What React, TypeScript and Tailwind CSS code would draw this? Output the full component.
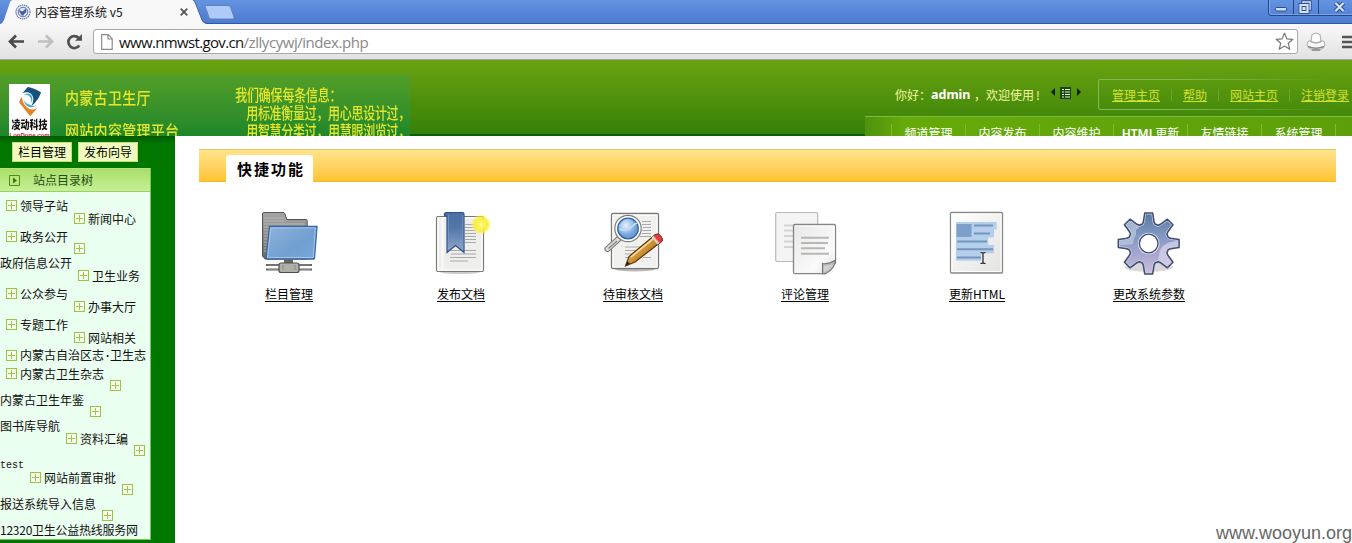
import React from "react";

const cjk = "font-['Noto_Sans_CJK_SC',sans-serif]";

type Node = { label?: React.ReactNode; icon?: boolean; row: string };

const nodes: Node[] = [
  { label: "领导子站", icon: true, row: "mt-[8px] pl-[6px]" },
  { label: "新闻中心", icon: true, row: "mt-px pl-[74px]" },
  { label: "政务公开", icon: true, row: "mt-[6px] pl-[6px]" },
  { icon: true, row: "pl-[74px]" },
  { label: "政府信息公开", row: "mt-[2px]" },
  { label: "卫生业务", icon: true, row: "mt-px pl-[78px]" },
  { label: "公众参与", icon: true, row: "mt-[6px] pl-[6px]" },
  { label: "办事大厅", icon: true, row: "mt-px pl-[74px]" },
  { label: "专题工作", icon: true, row: "mt-[6px] pl-[6px]" },
  { label: "网站相关", icon: true, row: "mt-px pl-[74px]" },
  { label: <>内蒙古自治区志<span className="inline-block w-[6px] text-center font-['Liberation_Mono',monospace] font-bold">·</span>卫生志</>, icon: true, row: "mt-[6px] pl-[6px]" },
  { label: "内蒙古卫生杂志", icon: true, row: "mt-[6px] pl-[6px]" },
  { icon: true, row: "pl-[110px]" },
  { label: "内蒙古卫生年鉴", row: "mt-[2px]" },
  { icon: true, row: "pl-[90px]" },
  { label: "图书库导航", row: "mt-[2px]" },
  { label: "资料汇编", icon: true, row: "mt-px pl-[66px]" },
  { icon: true, row: "pl-[134px]" },
  { label: "test", row: "mt-[3px] font-['Liberation_Mono',monospace] text-[10px]" },
  { label: "网站前置审批", icon: true, row: "pl-[30px]" },
  { icon: true, row: "pl-[122px]" },
  { label: "报送系统导入信息", row: "mt-[2px]" },
  { icon: true, row: "pl-[102px]" },
  { label: "12320卫生公益热线服务网", row: "mt-[2px] tracking-[-0.25px]" },
];

function Plus() {
  return (
    <svg className="-mt-px mr-[3px] shrink-0" width="11" height="11" viewBox="0 0 11 11" shapeRendering="crispEdges">
      <rect x=".5" y=".5" width="10" height="10" fill="#f6fff0" stroke="#9cc53f" />
      <path d="M2 5.5h7M5.5 2v7" stroke="#a0c848" />
    </svg>
  );
}

function FolderIcon() {
  return (
    <svg width="64" height="64" viewBox="0 0 64 64">
      <defs>
        <linearGradient id="fb" x1="0" y1="0" x2="0" y2="1"><stop stopColor="#a5a5a5" /><stop offset="1" stopColor="#6a6a6a" /></linearGradient>
        <linearGradient id="fs" x1="0" y1="0" x2="1" y2="1"><stop stopColor="#8fb3dc" /><stop offset=".6" stopColor="#719fd0" /><stop offset="1" stopColor="#79a8dc" /></linearGradient>
      </defs>
      <path d="M5.500 3q0-1.500 1.500-1.500h19q1.500 0 2 1.500l1.800 5.500H49q1.200 0 1.200 1.200V48H8L5.500 45z" fill="url(#fb)" stroke="#555" />
      <path d="M7 7h20M7 10h21M7 13h40M7 16h5M7 19h5M7 22h5M7 25h4M7 28h4M7 31h4M7 34h4M7 37h4M7 40h3" stroke="#c5c5c5" strokeWidth=".7" />
      <path d="M12.500 15.500H60L57.500 47q-.2 1-1.200 1H10.500Q9 48 9.200 46.500z" fill="url(#fs)" stroke="#3465a4" strokeWidth="1.300" />
      <path d="M13.700 16.800H58.400L56.300 46.500H10.500z" fill="none" stroke="#b4cfea" strokeWidth=".8" />
      <path d="M27 48.500h9v4h-9z" fill="#666" />
      <path d="M9 54h46M9 58.500h46" stroke="#666" strokeWidth="2.200" />
      <path d="M11 54h42M11 58.500h42" stroke="#a0a0a0" strokeWidth=".6" />
      <rect x="22" y="52" width="20" height="9.500" rx="2" fill="#b0b0aa" stroke="#4f504c" strokeWidth="1.200" />
      <path d="M26 54v5M38 54v5" stroke="#888a85" />
    </svg>
  );
}

function PublishIcon() {
  return (
    <svg width="64" height="64" viewBox="0 0 64 64">
      <defs>
        <linearGradient id="rb" x1="0" y1="0" x2="0" y2="1"><stop stopColor="#4a6fa5" /><stop offset=".4" stopColor="#5577aa" /><stop offset="1" stopColor="#93a9cc" /></linearGradient>
        <radialGradient id="glow"><stop stopColor="#fffcae" /><stop offset=".35" stopColor="#fff246" /><stop offset=".65" stopColor="#f8ed39" stopOpacity=".9" /><stop offset="1" stopColor="#fff46b" stopOpacity="0" /></radialGradient>
      </defs>
      <ellipse cx="31" cy="61" rx="20" ry="2" fill="#ccc" />
      <rect x="7.500" y="5.500" width="47" height="55" rx="1.500" fill="#eeeeec" stroke="#777" strokeWidth="1.200" />
      <rect x="9" y="7" width="44" height="52" fill="none" stroke="#fff" strokeWidth="1.200" />
      <path d="M13.500 7v52" stroke="#fafafa" strokeWidth="2" />
      <path d="M36 13.500h11M36 16.500h11M36 19.500h11M36 22.500h11M36 25.500h11M36 28.500h11M36 31.500h11M21 39.500h26M22 43h25M21 46.500h26M21 50h18" stroke="#a9a9a9" strokeWidth="1" />
      <path d="M15.500 5V3.500q0-2 2-2h16q1.500 0 1.500 1.500v38.500l-8.500-7-8.500 7V5z" fill="url(#rb)" stroke="#2c4f86" strokeWidth="1.200" />
      <path d="M19.300 4v34.500M33.800 4v34.500" stroke="#7fa0cf" strokeWidth=".8" />
      <circle cx="52" cy="13.500" r="10.500" fill="url(#glow)" />
    </svg>
  );
}

function ReviewIcon() {
  return (
    <svg width="64" height="64" viewBox="0 0 64 64">
      <defs>
        <radialGradient id="lens" cx=".4" cy=".35"><stop stopColor="#eaf2fc" /><stop offset=".55" stopColor="#a5c8ee" /><stop offset="1" stopColor="#6f9fd8" /></radialGradient>
        <linearGradient id="pen" x1="0" y1="0" x2="1" y2="1"><stop offset=".3" stopColor="#ecbb63" /><stop offset=".6" stopColor="#b87f25" /></linearGradient>
      </defs>
      <ellipse cx="34" cy="58" rx="20" ry="2.500" fill="#bbb" />
      <rect x="10.500" y="2.500" width="47" height="55" rx="1.500" fill="#f0f0ef" stroke="#777" strokeWidth="1.300" />
      <rect x="12" y="4" width="44" height="52" fill="none" stroke="#fff" />
      <path d="M41 10.500h9M41 13.500h9M42 16.500h8M41 19.500h9M41 22.500h9M39 25.500h11M24 36h21M24 39.500h18M24 43h15M24 46.500h10M42 46.500h8" stroke="#aaa" />
      <path d="M17.500 28L6.500 38" stroke="#777" strokeWidth="6" strokeLinecap="round" />
      <path d="M17.500 28L6.500 38" stroke="#ddd" strokeWidth="4" strokeLinecap="round" />
      <path d="M16 30L7.500 37.500" stroke="#888" strokeWidth="1.500" />
      <circle cx="27" cy="17.500" r="13.200" fill="#fff" stroke="#7b7d79" strokeWidth="1.200" />
      <circle cx="27" cy="17.500" r="10.300" fill="url(#lens)" stroke="#3465a4" strokeWidth="1.300" />
      <path d="M18.500 18q7 3 12-2t5.500-3" stroke="#c9def5" strokeWidth="1.500" fill="none" />
      <path d="M24.500 55L28 45.500 54.500 23.500q3-1.500 5.500 2t.5 5L34 51z" fill="url(#pen)" stroke="#5b3507" strokeWidth="1.200" />
      <path d="M30 46L53 27" stroke="#ffe0a0" strokeWidth="1.500" />
      <path d="M54.500 23.500q3-1.500 5.500 2t.5 5l-2.500 2-6-7z" fill="#e8383a" stroke="#8f3c36" />
      <path d="M50.500 26.500l6 7 2-1.500-6-7.300z" fill="#d6d2ca" />
      <path d="M24.500 55l1.600-4.500 3 2z" fill="#222" />
    </svg>
  );
}

function CommentsIcon() {
  return (
    <svg width="64" height="64" viewBox="0 0 64 64">
      <defs><linearGradient id="pg" x1="0" y1="0" x2="1" y2="1"><stop stopColor="#e8e8e8" /><stop offset=".7" stopColor="#fafafa" /><stop offset="1" stopColor="#ddd" /></linearGradient></defs>
      <rect x="2.700" y="1.500" width="42" height="49" rx="1.500" fill="#f4f4f4" stroke="#b9b9b9" strokeWidth="1.200" />
      <path d="M11 14.500h10M11 19.500h10M11 25h9M11 30.500h9M11 36h9" stroke="#d4d4d4" strokeWidth="2" />
      <path d="M22 13.500h39q1.500 0 1.500 1.500v37L52 62.700H22q-1.500 0-1.500-1.500V15q0-1.500 1.500-1.500z" fill="url(#pg)" stroke="#858585" strokeWidth="1.300" />
      <path d="M22 15h39v37" fill="none" stroke="#fff" />
      <path d="M28 26.800h28M28 32h27M28 37.300h24M28 42.700h28" stroke="#b7b7b5" strokeWidth="2" />
      <path d="M49.500 52.500q6 1 13-3.500-.5 9-10 13.700H49.500z" fill="#b9b9b7" stroke="#777" strokeWidth="1.100" />
      <path d="M51 54.500q5 .5 9-1.500-2 5-9 8z" fill="#d2d2d0" />
    </svg>
  );
}

function HtmlIcon() {
  return (
    <svg width="64" height="64" viewBox="0 0 64 64">
      <defs><linearGradient id="hp" x1="0" y1="0" x2="1" y2="1"><stop stopColor="#fff" /><stop offset="1" stopColor="#e3e3e1" /></linearGradient></defs>
      <rect x="5.500" y="1.500" width="52" height="60.500" rx="1" fill="url(#hp)" stroke="#888" strokeWidth="1.300" />
      <rect x="7" y="3" width="49" height="57.500" fill="none" stroke="#fff" />
      <path d="M11 11h40.700v7.500H49v8h-5.700V34H49v8.300H36.300v7.500H11z" fill="#b5cfea" />
      <path d="M11.500 13h15v13h-15z" fill="#7e9fc9" />
      <path d="M29 14.500h19M29 22.500h16M12 30.500h30M12 38.300h36M12 46.500h24" stroke="#7595bf" strokeWidth="2" />
      <path d="M35.500 41.500q2.500 0 2.500 1v9q0 1-2.500 1M40.500 41.500q-2.500 0-2.500 1v9q0 1 2.500 1" fill="none" stroke="#222" strokeWidth="1.200" />
    </svg>
  );
}

const CX = 31.7;
const CY = 32.5;
function gearPath() {
  const pts: string[] = [];
  for (let i = 0; i < 8; i++) {
    const a = (i * Math.PI) / 4 - Math.PI / 2;
    for (const [r, d] of [[20.5, -0.31], [22.5, -0.24], [30.7, -0.13], [30.7, 0.13], [22.5, 0.24], [20.5, 0.31]]) {
      pts.push(`${(CX + r * Math.cos(a + d)).toFixed(1)} ${(CY + r * Math.sin(a + d)).toFixed(1)}`);
    }
  }
  return "M" + pts.join("L") + "z";
}

function GearIcon() {
  const d = gearPath();
  return (
    <svg width="64" height="64" viewBox="0 0 64 64">
      <defs>
        <linearGradient id="gr" x1="0" y1="0" x2="0" y2="1"><stop stopColor="#57779f" /><stop offset=".35" stopColor="#7f97c0" /><stop offset=".7" stopColor="#aaa7cf" /><stop offset="1" stopColor="#cdbfe0" /></linearGradient>
        <clipPath id="gc"><path d={d} /></clipPath>
      </defs>
      <ellipse cx="32" cy="56" rx="24" ry="5" fill="#d8d8d8" />
      <path d={d} fill="url(#gr)" />
      <g clipPath="url(#gc)">
        <path d="M0 34V5h23l-1 12-3 2v5l-2 3-1 6-7 1z" fill="#bccbe0" opacity=".7" />
        <path d="M64 30q-21 0-22 14t-9 20h31z" fill="#d9d1ea" opacity=".75" />
        <path d={d} fill="none" stroke="#c5cfe6" strokeWidth="3" />
      </g>
      <path d={d} fill="none" stroke="#414d71" strokeWidth="1.500" strokeLinejoin="round" />
      <circle cx={CX} cy={CY} r="10.800" fill="#d7def0" />
      <circle cx={CX} cy={CY} r="9.300" fill="#fff" stroke="#414d71" strokeWidth="1.300" />
    </svg>
  );
}

const shortcuts = [
  { label: "栏目管理", Icon: FolderIcon },
  { label: "发布文档", Icon: PublishIcon },
  { label: "待审核文档", Icon: ReviewIcon },
  { label: "评论管理", Icon: CommentsIcon },
  { label: "更新HTML", Icon: HtmlIcon },
  { label: "更改系统参数", Icon: GearIcon },
];

function TabStrip() {
  return (
    <div className="flex h-6 justify-between border-b border-[#2f5b9d] bg-linear-to-b from-[#6493e0] to-[#4c7bd0]">
      <div className="relative flex h-6 w-[240px] items-center">
        <svg className="absolute left-0 top-0" width="240" height="24" viewBox="0 0 240 24">
          <path d="M0 24q3-1 4-4L10 2q1-2 3-2h179q2 0 3 2l7 18q1 3 5 4z" fill="#f8f8f8" />
          <path d="M193 0q1.500.5 2 2l7 18q1 3 5 3.500" fill="none" stroke="#3864a8" />
          <path d="M206 5.500h22q2 0 2.500 1.500l3.500 10q.5 2-1.500 2h-21q-2 0-2.500-1.500l-3.500-10q-.5-2 .5-2z" fill="#aecbf7" stroke="#5c83bd" />
        </svg>
        <svg className="relative ml-[15px]" width="16" height="16" viewBox="0 0 16 16">
          <circle cx="8" cy="8" r="7" fill="#eef1fa" stroke="#6678ab" strokeWidth="1.200" strokeDasharray="1.500 .6" />
          <circle cx="8" cy="8" r="4.800" fill="#dce4f3" stroke="#5e72aa" />
          <path d="M4 5q1.500 2.500 3.500 2.500L11 4.500Q12 9 9 10l-.5 1.500h-2L6 10Q4 8.500 4 5z" fill="#435c9f" />
        </svg>
        <span className={`relative ml-1 whitespace-pre text-[12px] leading-6 text-[#111] ${cjk}`}>内容管理系统 v5</span>
        <svg className="relative ml-auto mr-[52px]" width="8" height="8" viewBox="0 0 8 8"><path d="M.7.7l6.600 6.600M7.300.7L.7 7.300" stroke="#555" strokeWidth="1.800" /></svg>
      </div>
      <svg width="84" height="17" viewBox="0 0 84 17">
        <path d="M.5 0v13q0 2.500 2.500 2.500h81M25.500 0v15M50.500 0v15" fill="none" stroke="#24478a" />
        <path d="M1.500 0v12.500q0 2 2 2h80.500" fill="none" stroke="#8fb3ee" strokeWidth=".7" />
        <rect x="7.500" y="7.500" width="11" height="3.500" rx="1" fill="#cfe0fa" stroke="#2d4d89" />
        <path d="M35 2h7v7h-7z" fill="none" stroke="#2d4d89" strokeWidth="3.400" />
        <path d="M35 2h7v7h-7z" fill="none" stroke="#d6e5fc" strokeWidth="1.600" />
        <path d="M32.500 5h7v7h-7z" fill="#5c85d0" stroke="#2d4d89" strokeWidth="3.800" />
        <path d="M32.500 5h7v7h-7z" fill="#2d4d89" stroke="#d6e5fc" strokeWidth="2.200" />
        <path d="M34.500 7h3v3h-3z" fill="#d6e5fc" />
        <path d="M67.500 3l8 8M75.500 3l-8 8" stroke="#2d4d89" strokeWidth="4.200" />
        <path d="M67.500 3l8 8M75.500 3l-8 8" stroke="#d6e5fc" strokeWidth="2.200" />
      </svg>
    </div>
  );
}

function Toolbar() {
  return (
    <div className="flex h-9 items-center border-b border-[#a3a3a3] bg-linear-to-b from-[#f8f8f8] to-[#e2e2e2]">
      <svg className="shrink-0" width="93" height="30" viewBox="0 0 93 30">
        <path d="M24 14.500H11M16 8.500l-6 6 6 6" fill="none" stroke="#4a4a4a" strokeWidth="2.700" />
        <path d="M38 14.500h13M46 8.500l6 6-6 6" fill="none" stroke="#c0c0c0" strokeWidth="2.700" />
        <path d="M79.300 18.500a6 6 0 1 1-.5-7.500" fill="none" stroke="#505050" strokeWidth="2.700" />
        <path d="M82 7v6.700h-7z" fill="#505050" />
      </svg>
      <div className="flex h-[25px] w-[1205px] items-center rounded-[3px] border border-[#a9a9a9] bg-white">
        <svg className="ml-[7px] shrink-0" width="12" height="16" viewBox="0 0 12 16"><path d="M.7.7h6.500l4 4v10.600H.7zM7 1v4h4" fill="#fff" stroke="#8b8b8b" strokeWidth="1.200" /></svg>
        <span className="ml-[6px] w-[260px] whitespace-nowrap font-['Open_Sans',sans-serif] text-[15px] leading-[22px] tracking-[-0.45px] text-[#888]">
          <span className="tracking-[-0.65px] text-[#111]">www.nmwst.gov.cn</span>/zllycywj/index.php
        </span>
        <svg className="ml-auto mr-[3px]" width="19" height="19" viewBox="0 0 19 19"><path d="M9.500 1.200l2.400 5.600 6 .5-4.600 4 1.500 6-5.300-3.300-5.300 3.300 1.500-6-4.600-4 6-.5z" fill="#fff" stroke="#777" strokeWidth="1.200" strokeLinejoin="round" /></svg>
      </div>
      <svg className="ml-[8px] shrink-0" width="20" height="20" viewBox="0 0 20 20">
        <path d="M6 2.500q4-3 8 0l1 7q-5 2.500-10 0z" fill="#fcfcfc" stroke="#aaa" />
        <path d="M5 8.500q-4 0-4 4 1.500 4 5 5.500h8q4-1.500 5-5.500 0-4-4-4v1.500q-5 2.500-10 0z" fill="#f6f6f6" stroke="#aaa" />
        <path d="M2 14.500q8 3.500 16 0M6 18h8" fill="none" stroke="#888" strokeWidth="1.500" />
      </svg>
      <svg className="ml-auto shrink-0" width="10" height="14" viewBox="0 0 10 14"><path d="M0 2h10M0 7h10M0 12h10" stroke="#555" strokeWidth="2.600" /></svg>
    </div>
  );
}

function Logo() {
  return (
    <div className="ml-[9px] mt-[10px] flex h-[60px] w-[41px] shrink-0 flex-col items-center overflow-hidden bg-white">
      <svg className="mt-[2px] shrink-0" width="24" height="31" viewBox="55 90 72 95">
        <path d="M68 112L84 93Q106 96 125 110Q120 127 105 143L94 153Q109 128 94 114Q84 106 68 112z" fill="#15527c" />
        <path d="M73 117Q87 108 96 119Q101 130 95 143Q96 128 88 121Q82 116 73 117z" fill="#48b0cb" />
        <path d="M66 124Q57 135 59 142Q72 158 92 183L114 157Q100 166 86 158Q69 149 66 124z" fill="#e58326" />
        <path d="M72 132Q73 149 88 154Q100 158 111 150Q99 153 89 147Q76 143 72 132z" fill="#48b0cb" />
      </svg>
      <span className={`scale-y-125 whitespace-nowrap text-[9px] font-black leading-[15px] text-[#111] ${cjk}`}>凌动科技</span>
      <span className="font-['Liberation_Sans',sans-serif] text-[6px] font-bold leading-[7px] text-[#d3123a]">LonDone.com</span>
    </div>
  );
}

function Divider() {
  return <i className="mx-[11px] h-3 w-px bg-[#6ea52d]" />;
}

function Header() {
  return (
    <header className={`flex h-[76px] justify-between overflow-hidden bg-linear-to-b from-[#6aa310] to-[#348009] ${cjk}`}>
      <div className="mt-[14px] flex h-[62px] w-[410px] shrink-0 overflow-hidden bg-linear-to-b from-[#539f28] to-[#1c872b]">
        <Logo />
        <div className="ml-[15px] mt-[11px] w-[172px] whitespace-nowrap text-[14px] font-medium tracking-[0.3px] text-[#e6e62c]">
          <div className="h-8 origin-center scale-y-115 leading-[26px]">内蒙古卫生厅</div>
          <div className="scale-y-115 leading-[26px]">网站内容管理平台</div>
        </div>
        <div className="ml-px mt-[11px] whitespace-nowrap text-[12px] font-medium leading-[18px] text-[#e6e62c]">
          <div className="h-[18px] scale-y-130 tracking-[-0.2px]">我们确保每条信息：</div>
          <div className="h-[18px] scale-y-130 pl-[11px] tracking-[-0.3px]">用标准衡量过，用心思设计过，</div>
          <div className="h-[18px] scale-y-130 pl-[11px] tracking-[-0.3px]">用智慧分类过，用慧眼浏览过，</div>
        </div>
      </div>
      <div className="flex-1 border-b-2 border-[#0b6010]" />
      <div className="flex w-[487px] flex-col text-[12px]">
        <div className="flex h-[56px] items-center">
          <div className="ml-[30px] mt-[14px] flex w-[154px] items-center whitespace-nowrap text-[#f4f8a0]">
            你好：<b className="w-10 font-['Noto_Sans',sans-serif] text-[12.5px] text-white">admin</b><span className="ml-[3px]">，欢迎使用<span className="ml-[2px]">!</span></span>
          </div>
          <svg className="mt-[10px]" width="36" height="14" viewBox="0 0 36 14">
            <path d="M6 2v8L2 6zM28 2v8l4-4z" fill="#0d1d04" />
            <path d="M11 1h11v12H11z" fill="#18480e" />
            <path d="M13 3.500h2M13 6h2M13 8.500h2M13 11h2M16 3.500h5M16 6h5M16 8.500h5M16 11h5" stroke="#e8f0df" />
          </svg>
          <div className="relative ml-[13px] mt-[13px] flex h-[31px] shrink-0 items-center whitespace-nowrap pl-[14px] text-[#d2e02f]">
            <div className="absolute inset-y-0 left-0 w-[237px] rounded-[2px] border border-r-0 border-[#86b956] mask-r-from-30%" />
            <a className="underline">管理主页</a><Divider />
            <a className="underline">帮助</a><Divider />
            <a className="underline">网站主页</a><Divider />
            <a className="underline">注销登录</a>
          </div>
        </div>
        <nav className="flex h-5 w-full border-t border-[#82b944] bg-linear-to-r from-[#4d920d] via-[#66aa09] via-8% to-[#5c9f0a] pl-[26px] text-white">
          {["频道管理", "内容发布", "内容维护", "HTML更新", "友情链接", "系统管理"].map((t) => (
            <a key={t} className="mt-[7px] h-[20px] w-[74px] shrink-0 whitespace-nowrap border-l border-[#7fba2f] text-center leading-[18px]">
              {t === "HTML更新" ? <><b className="font-['Noto_Sans',sans-serif] font-semibold">HTML</b>更新</> : t}
            </a>
          ))}
          <i className="mt-[7px] w-px shrink-0 bg-[#7fba2f]" />
        </nav>
      </div>
    </header>
  );
}

function Sidebar() {
  return (
    <aside className={`w-[175px] shrink-0 bg-[#007800] text-[12px] ${cjk}`}>
      <div className="flex h-8 gap-[6px] bg-linear-to-b from-[#005a00] to-[#007800] to-25% pl-3 pt-[6px]">
        {["栏目管理", "发布向导"].map((t) => (
          <button key={t} className="flex h-5 w-[60px] items-center justify-center whitespace-nowrap border border-[#c9dd84] bg-[#f0fcbf] leading-[18px]">{t}</button>
        ))}
      </div>
      <div className="h-[372px] w-[151px] overflow-hidden border-b border-r border-[#79c65a] bg-[#ebfff1]">
        <div className="flex h-6 items-center border-b border-t border-b-[#9bcf62] border-t-[#b5e27d] bg-linear-to-b from-[#a9df69] to-[#c6ef96] text-[#284b16]">
          <svg className="ml-[9px] mr-[13px]" width="11" height="11" viewBox="0 0 11 11"><path d="M.5.5h10v10H.5z" fill="#b8e77c" stroke="#518d1d" /><path d="M4 2.500v6l4-3z" fill="#3d7413" /></svg>
          站点目录树
        </div>
        {nodes.map((n, i) => (
          <div key={i} className={`flex h-3 items-center whitespace-nowrap leading-3 text-[#111] ${n.row}`}>
            {n.icon && <Plus />}
            {n.label && <span>{n.label}</span>}
          </div>
        ))}
      </div>
    </aside>
  );
}

export default function App() {
  return (
    <div className="flex h-[543px] w-[1352px] flex-col overflow-hidden bg-white">
      <TabStrip />
      <Toolbar />
      <Header />
      <div className="flex h-[407px]">
        <Sidebar />
        <main className={`flex flex-1 flex-col ${cjk}`}>
          <div className="ml-6 mr-4 mt-[13px] flex h-[33px] items-end border-b border-t border-b-[#f6b82b] border-t-[#e2c566] bg-linear-to-b from-[#ffe48a] to-[#ffc42d] pl-[27px]">
            <h2 className="-mb-px h-[27px] w-[87px] rounded-t-[3px] bg-white pl-[11px] text-[15px] font-bold leading-[28px] tracking-[2px] text-black">快捷功能</h2>
          </div>
          <div className="ml-7 mt-[29px] flex">
            {shortcuts.map(({ label, Icon }) => (
              <a key={label} className="flex w-[172px] flex-col items-center text-[12px] text-black">
                <Icon />
                <span className="mt-[9px] leading-5 underline underline-offset-2">{label}</span>
              </a>
            ))}
          </div>
          <div className="mt-auto self-end whitespace-nowrap font-['Liberation_Sans',sans-serif] text-[18px] leading-[20px] text-[#666]">www.wooyun.org</div>
        </main>
      </div>
    </div>
  );
}
